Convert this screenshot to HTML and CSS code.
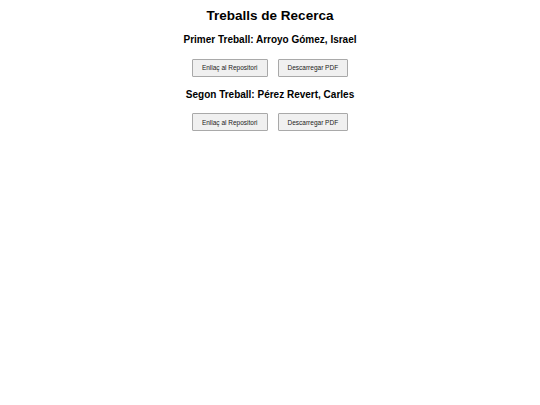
FILE: index.html
```html
<!DOCTYPE html>
<html lang="ca">
<head>
<meta charset="utf-8">
<title>Treballs de Recerca</title>
<link rel="stylesheet" href="styles.css">
</head>
<body>
<main class="page">
  <h1 class="title">Treballs de Recerca</h1>
  <section class="work">
    <h2 class="work-title">Primer Treball: Arroyo Gómez, Israel</h2>
    <div class="actions">
      <button class="btn">Enllaç al Repositori</button>
      <button class="btn">Descarregar PDF</button>
    </div>
  </section>
  <section class="work">
    <h2 class="work-title">Segon Treball: Pérez Revert, Carles</h2>
    <div class="actions">
      <button class="btn">Enllaç al Repositori</button>
      <button class="btn">Descarregar PDF</button>
    </div>
  </section>
</main>
</body>
</html>
```
FILE: styles.css
```css
html, body {
  margin: 0;
  padding: 0;
  background: #ffffff;
}

body {
  font-family: "Liberation Sans", Arial, sans-serif;
  color: #000000;
}

.page {
  display: flex;
  flex-direction: column;
  align-items: center;
  padding-top: 8px;
}

.title {
  margin: 0;
  font-size: 13.5px;
  font-weight: bold;
  line-height: 15px;
}

.work {
  display: flex;
  flex-direction: column;
  align-items: center;
}

.work + .work {
  margin-top: 1px;
}

.work-title {
  margin: 11px 0 0;
  font-size: 10px;
  font-weight: bold;
  line-height: 12px;
}

.actions {
  display: flex;
  gap: 10px;
  margin-top: 12.5px;
}

.btn {
  font-family: "Liberation Sans", Arial, sans-serif;
  font-size: 6.5px;
  height: 18px;
  padding: 0 9px;
  background: #f0f0f0;
  border: 1px solid #a9a9a9;
  border-radius: 1px;
  color: #222222;
}
```
